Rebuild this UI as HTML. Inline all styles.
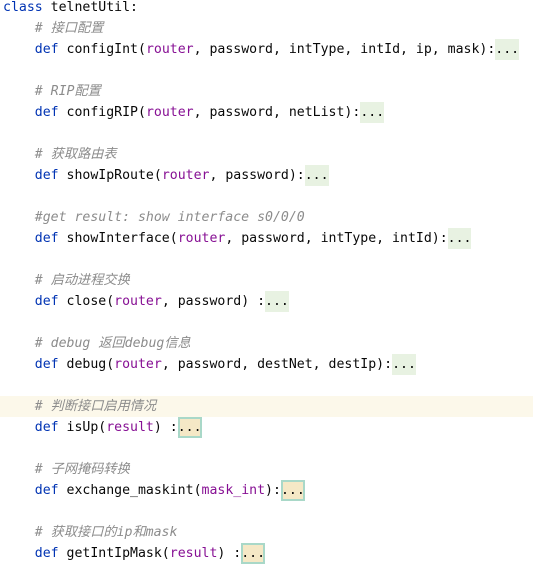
<!DOCTYPE html>
<html><head><meta charset="utf-8"><style>
html,body{margin:0;padding:0;background:#fff;width:533px;height:568px;overflow:hidden}
.c{position:absolute;left:3px;top:-3px;font-family:"DejaVu Sans Mono","Noto Sans CJK SC",monospace;font-size:13.2px;color:#080808}
.l{height:21px;line-height:21px;white-space:pre;position:relative}
.hl{background:#fcf8ea;margin-left:-3px;padding-left:3px;width:540px}
.k{color:#0033b3}.p{color:#871094}
.cm{color:#8c8c8c;font-style:italic}
.f{background:#e8f2e2;display:inline-block;height:21px;vertical-align:top}
.b{background:#f5e8c6;display:inline-block;height:21px;vertical-align:top;box-shadow:inset 0 0 0 2px #a9d8c8}
</style></head><body><div class="c">
<div class="l"><span class="k">class</span> telnetUtil:</div>
<div class="l cm">    # 接口配置</div>
<div class="l">    <span class="k">def</span> configInt(<span class="p">router</span>, password, intType, intId, ip, mask):<span class="f">...</span></div>
<div class="l"> </div>
<div class="l cm">    # RIP配置</div>
<div class="l">    <span class="k">def</span> configRIP(<span class="p">router</span>, password, netList):<span class="f">...</span></div>
<div class="l"> </div>
<div class="l cm">    # 获取路由表</div>
<div class="l">    <span class="k">def</span> showIpRoute(<span class="p">router</span>, password):<span class="f">...</span></div>
<div class="l"> </div>
<div class="l cm">    #get result: show interface s0/0/0</div>
<div class="l">    <span class="k">def</span> showInterface(<span class="p">router</span>, password, intType, intId):<span class="f">...</span></div>
<div class="l"> </div>
<div class="l cm">    # 启动进程交换</div>
<div class="l">    <span class="k">def</span> close(<span class="p">router</span>, password) :<span class="f">...</span></div>
<div class="l"> </div>
<div class="l cm">    # debug 返回debug信息</div>
<div class="l">    <span class="k">def</span> debug(<span class="p">router</span>, password, destNet, destIp):<span class="f">...</span></div>
<div class="l"> </div>
<div class="l cm hl">    # 判断接口启用情况</div>
<div class="l">    <span class="k">def</span> isUp(<span class="p">result</span>) :<span class="b">...</span></div>
<div class="l"> </div>
<div class="l cm">    # 子网掩码转换</div>
<div class="l">    <span class="k">def</span> exchange_maskint(<span class="p">mask_int</span>):<span class="b">...</span></div>
<div class="l"> </div>
<div class="l cm">    # 获取接口的ip和mask</div>
<div class="l">    <span class="k">def</span> getIntIpMask(<span class="p">result</span>) :<span class="b">...</span></div>
</div></body></html>
